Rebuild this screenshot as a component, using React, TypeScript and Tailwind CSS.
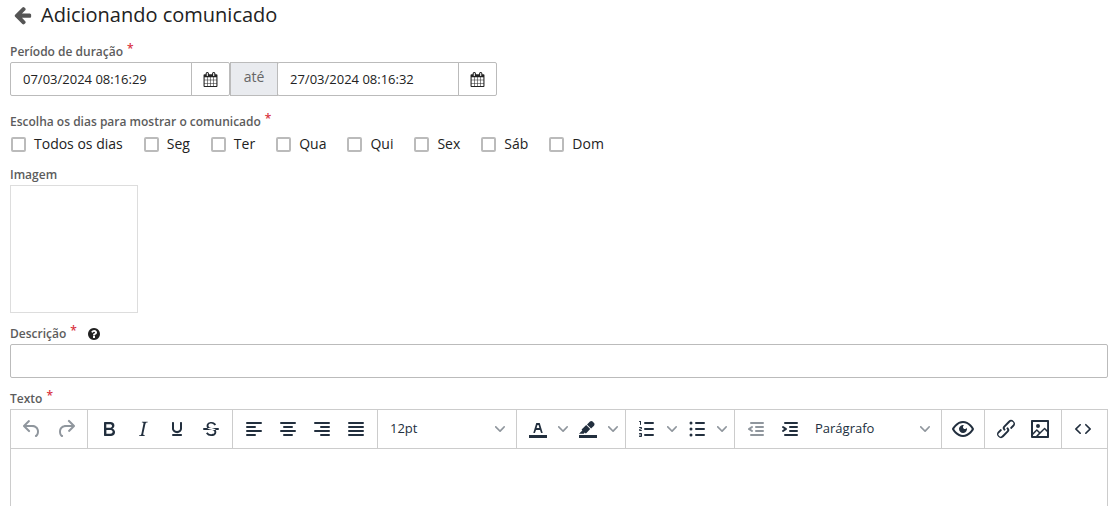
import React from 'react';

const ICONS = {
  undo: 'M6.4 8H12c3.7 0 6.2 2 6.8 5.1.6 2.7-.4 5.6-2.3 6.8a1 1 0 01-1-1.8c1.1-.6 1.8-2.7 1.4-4.6-.5-2.1-2.1-3.5-4.9-3.5H6.4l3.3 3.3a1 1 0 11-1.4 1.4l-5-5a1 1 0 010-1.4l5-5a1 1 0 011.4 1.4L6.4 8z',
  redo: 'M17.6 10H12c-2.8 0-4.4 1.4-4.9 3.5-.4 2 .3 4 1.4 4.6a1 1 0 11-1 1.8c-2-1.2-2.9-4.1-2.3-6.8.6-3 3-5.1 6.8-5.1h5.6l-3.3-3.3a1 1 0 111.4-1.4l5 5a1 1 0 010 1.4l-5 5a1 1 0 01-1.4-1.4l3.3-3.3z',
  bold: 'M7.8 19c-.3 0-.5 0-.6-.2l-.2-.5V5.7c0-.2 0-.4.2-.5l.6-.2h5c1.5 0 2.7.3 3.5 1 .7.6 1.1 1.4 1.1 2.5a3 3 0 01-.6 1.9c-.4.6-1 1-1.6 1.2.4.1.9.3 1.3.6s.8.7 1 1.2c.4.4.5 1 .5 1.6 0 1.3-.4 2.3-1.3 3-.8.7-2.1 1-3.8 1H7.8zm5-8.3c.6 0 1.2-.1 1.6-.5.4-.3.6-.7.6-1.3 0-1.1-.8-1.7-2.3-1.7H9.3v3.5h3.4zm.5 6c.7 0 1.3-.1 1.7-.4.4-.4.6-.9.6-1.5s-.2-1-.7-1.4c-.4-.3-1-.4-2-.4H9.4v3.8h4z',
  italic: 'M16.7 4.7l-.1.9h-.3c-.6 0-1 0-1.4.3-.3.3-.4.6-.5 1.1l-2.1 9.8v.6c0 .5.4.8 1.4.8h.2l-.2.8H8l.2-.8h.2c1.1 0 1.8-.5 2-1.5l2-9.8.1-.5c0-.6-.4-.8-1.4-.8h-.3l.2-.9h5.8z',
  underline: 'M16 5c.6 0 1 .4 1 1v5.5a4 4 0 01-.4 1.8l-1 1.4a5.3 5.3 0 01-5.5 1 5 5 0 01-1.6-1c-.5-.4-.8-.9-1.1-1.4a4 4 0 01-.4-1.8V6c0-.6.4-1 1-1s1 .4 1 1v5.5c0 .3 0 .6.2 1l.6.7a3.3 3.3 0 002.2.8 3.4 3.4 0 002.2-.8c.3-.2.4-.5.6-.8l.2-.9V6c0-.6.4-1 1-1zM8 17h8c.6 0 1 .4 1 1s-.4 1-1 1H8a1 1 0 010-2z',
  strike: 'M15.6 8.5c-.5-.7-1-1.1-1.3-1.3-.6-.4-1.3-.6-2-.6-2.7 0-2.8 1.7-2.8 2.1 0 1.6 1.8 2 3.2 2.3 4.4.9 4.6 2.8 4.6 3.9 0 1.4-.7 4.1-5 4.1A6.2 6.2 0 017 16.4l1.5-1.1c.4.6 1.6 2 3.7 2 1.6 0 2.5-.4 3-1.2.4-.8.3-2-.8-2.6-.7-.4-1.6-.7-2.9-1-1-.2-3.9-.8-3.9-3.6C7.6 6 10.3 5 12.4 5c2.9 0 4.2 1.6 4.7 2.4l-1.5 1.1zM5 11h14a1 1 0 010 2H5a1 1 0 010-2z',
  alignLeft: 'M5 5h14a1 1 0 010 2H5a1 1 0 110-2zm0 4h8a1 1 0 010 2H5a1 1 0 110-2zm0 8h8a1 1 0 010 2H5a1 1 0 010-2zm0-4h14a1 1 0 010 2H5a1 1 0 010-2z',
  alignCenter: 'M5 5h14a1 1 0 010 2H5a1 1 0 110-2zm3 4h8a1 1 0 010 2H8a1 1 0 110-2zm0 8h8a1 1 0 010 2H8a1 1 0 010-2zm-3-4h14a1 1 0 010 2H5a1 1 0 010-2z',
  alignRight: 'M5 5h14a1 1 0 010 2H5a1 1 0 110-2zm6 4h8a1 1 0 010 2h-8a1 1 0 010-2zm0 8h8a1 1 0 010 2h-8a1 1 0 010-2zm-6-4h14a1 1 0 010 2H5a1 1 0 010-2z',
  justify: 'M5 5h14a1 1 0 010 2H5a1 1 0 110-2zm0 4h14a1 1 0 010 2H5a1 1 0 110-2zm0 4h14a1 1 0 010 2H5a1 1 0 010-2zm0 4h14a1 1 0 010 2H5a1 1 0 010-2z',
  textColor: 'M3 18h18v3H3zM8.7 16h-.8a.5.5 0 01-.5-.6l2.7-9c.1-.3.3-.4.5-.4h2.8c.2 0 .4.1.5.4l2.7 9a.5.5 0 01-.5.6h-.8a.5.5 0 01-.4-.4l-.7-2.2c0-.3-.3-.4-.5-.4h-3.4c-.2 0-.4.1-.5.4l-.7 2.2c0 .3-.2.4-.4.4zm2.6-7.6l-.6 2a.5.5 0 00.5.6h1.6a.5.5 0 00.5-.6l-.6-2c0-.3-.3-.4-.5-.4h-.4c-.2 0-.4.1-.5.4z',
  highlight: 'M3 18h18v3H3zM7.7 16.7H3l3.3-3.3-.7-.8L10.2 8l4 4.1-4 4.2c-.2.2-.6.2-.8 0l-.6-.7-1.1 1.1zm5-7.5L11 7.4l3-2.9a2 2 0 012.6 0L18 6c.7.7.7 2 0 2.7l-2.9 2.9-1.8-1.8-.5-.6z',
  listNum: 'M10 17h8a1 1 0 010 2h-8a1 1 0 010-2zm0-6h8a1 1 0 010 2h-8a1 1 0 010-2zm0-6h8a1 1 0 010 2h-8a1 1 0 110-2zM6 4v3.5c0 .3-.2.5-.5.5a.5.5 0 01-.5-.5V5h-.5a.5.5 0 010-1H6zm-1 8.8l.2.2h1.3c.3 0 .5.2.5.5s-.2.5-.5.5H4.9a1 1 0 01-.9-1V13c0-.4.3-.8.6-1l1.2-.4.2-.3a.2.2 0 00-.2-.2H4.5a.5.5 0 01-.5-.5c0-.3.2-.5.5-.5h1.6c.5 0 .9.4.9 1v.1c0 .4-.3.8-.6 1l-1.2.4-.2.3zM7 17v2c0 .6-.4 1-1 1H4.5a.5.5 0 010-1h1.2c.2 0 .3-.1.3-.3 0-.2-.1-.3-.3-.3H4.4a.4.4 0 110-.8h1.3c.2 0 .3-.1.3-.3 0-.2-.1-.3-.3-.3H4.5a.5.5 0 110-1H6c.6 0 1 .4 1 1z',
  listBull: 'M11 5h8a1 1 0 010 2h-8a1 1 0 010-2zm0 6h8a1 1 0 010 2h-8a1 1 0 010-2zm0 6h8a1 1 0 010 2h-8a1 1 0 010-2zM4.5 6a1.5 1.5 0 113 0 1.5 1.5 0 01-3 0zm0 6a1.5 1.5 0 113 0 1.5 1.5 0 01-3 0zm0 6a1.5 1.5 0 113 0 1.5 1.5 0 01-3 0z',
  outdent: 'M7 5h12a1 1 0 010 2H7a1 1 0 110-2zm5 4h7a1 1 0 010 2h-7a1 1 0 010-2zm0 4h7a1 1 0 010 2h-7a1 1 0 010-2zm-5 4h12a1 1 0 010 2H7a1 1 0 010-2zm1.6-3.8a1 1 0 01-1.2 1.6l-3-2a1 1 0 010-1.6l3-2a1 1 0 011.2 1.6L6.8 12l1.8 1.2z',
  indent: 'M7 5h12a1 1 0 010 2H7a1 1 0 110-2zm5 4h7a1 1 0 010 2h-7a1 1 0 010-2zm0 4h7a1 1 0 010 2h-7a1 1 0 010-2zm-5 4h12a1 1 0 010 2H7a1 1 0 010-2zm-2.6-3.8L6.2 12l-1.8-1.2a1 1 0 011.2-1.6l3 2a1 1 0 010 1.6l-3 2a1 1 0 11-1.2-1.6z',
  preview: 'M3.5 12.5c.5.8 1.1 1.6 1.8 2.3 2 2 4.2 3.2 6.7 3.2s4.7-1.2 6.7-3.2a16.2 16.2 0 002.1-2.8 15.7 15.7 0 00-2.1-2.8c-2-2-4.2-3.2-6.7-3.2a9.3 9.3 0 00-6.7 3.2A16.2 16.2 0 003.2 12c0 .2.2.3.3.5zm-2.4-1l.7-1.2L4 7.8C6.2 5.4 8.9 4 12 4c3 0 5.8 1.4 8.1 3.8a18.2 18.2 0 012.8 3.7v1l-.7 1.2-2.1 2.5c-2.3 2.4-5 3.8-8.1 3.8-3 0-5.8-1.4-8.1-3.8a18.2 18.2 0 01-2.8-3.7 1 1 0 010-1zm12-3.3a2 2 0 102.7 2.6 4 4 0 11-2.6-2.6z',
  link: 'M6.2 12.3a1 1 0 011.4 1.4l-2.1 2a2 2 0 102.7 2.8l4.8-4.8a1 1 0 000-1.4 1 1 0 111.4-1.3 2.9 2.9 0 010 4L9.6 20a3.9 3.9 0 01-5.5-5.5l2-2zm11.6-.6a1 1 0 01-1.4-1.4l2-2a2 2 0 10-2.6-2.8L11 10.3a1 1 0 000 1.4A1 1 0 119.6 13a2.9 2.9 0 010-4L14.4 4a3.9 3.9 0 015.5 5.5l-2 2z',
  image: 'M5 15.7l3.3-3.2c.3-.3.7-.3 1 0L12 15l4.1-4c.3-.4.8-.4 1 0l2 1.9V5H5v10.7zM5 18V19h3l2.8-2.9-2-2L5 17.9zm14-3l-2.5-2.4-6.4 6.5H19v-4zM4 3h16c.6 0 1 .4 1 1v16c0 .6-.4 1-1 1H4a1 1 0 01-1-1V4c0-.6.4-1 1-1zm6 8a2 2 0 100-4 2 2 0 000 4z',
  code: 'M9.8 15.7c.3.3.3.8 0 1-.3.4-.9.4-1.2 0l-4.4-4.1a.8.8 0 010-1.2l4.4-4.2c.3-.3.9-.3 1.2 0 .3.3.3.8 0 1.1L6 12l3.8 3.7zM14.2 15.7c-.3.3-.3.8 0 1 .4.4.9.4 1.2 0l4.4-4.1c.3-.3.3-.9 0-1.2l-4.4-4.2a.8.8 0 00-1.2 0c-.3.3-.3.8 0 1.1L18 12l-3.8 3.7z',
};

const ARROW_LEFT =
  'M1536 896v128q0 53-32.5 90.5t-84.5 37.5h-704l293 294q38 36 38 90t-38 90l-75 76q-37 37-90 37-52 0-91-37l-651-652q-37-37-37-90 0-52 37-91l651-650q38-38 91-38 52 0 90 38l75 74q38 38 38 91t-38 91l-293 293h704q52 0 84.5 37.5t32.5 90.5z';
const CALENDAR =
  'M192 1664h288v-288h-288v288zm352 0h320v-288h-320v288zm-352-352h288v-320h-288v320zm352 0h320v-320h-320v320zm-352-384h288v-288h-288v288zm736 736h320v-288h-320v288zm-384-736h320v-288h-320v288zm768 736h288v-288h-288v288zm-384-352h320v-320h-320v320zm-352-864v-288q0-13-9.5-22.5t-22.5-9.5h-64q-13 0-22.5 9.5t-9.5 22.5v288q0 13 9.5 22.5t22.5 9.5h64q13 0 22.5-9.5t9.5-22.5zm736 864h288v-320h-288v320zm-384-384h320v-288h-320v288zm384 0h288v-288h-288v288zm32-480v-288q0-13-9.5-22.5t-22.5-9.5h-64q-13 0-22.5 9.5t-9.5 22.5v288q0 13 9.5 22.5t22.5 9.5h64q13 0 22.5-9.5t9.5-22.5zm384-64v1280q0 52-38 90t-90 38h-1408q-52 0-90-38t-38-90v-1280q0-52 38-90t90-38h128v-96q0-66 47-113t113-47h64q66 0 113 47t47 113v96h384v-96q0-66 47-113t113-47h64q66 0 113 47t47 113v96h128q52 0 90 38t38 90z';
const QUESTION =
  'M1024 1376v-192q0-14-9-23t-23-9h-192q-14 0-23 9t-9 23v192q0 14 9 23t23 9h192q14 0 23-9t9-23zm256-672q0-88-55.5-163t-138.5-116-170-41q-243 0-371 213-15 24 8 42l132 100q7 6 19 6 16 0 25-12 53-68 86-92 34-24 86-24 48 0 85.5 26t37.5 59q0 38-20 61t-68 45q-63 28-115.5 86.5t-52.5 125.5v36q0 14 9 23t23 9h192q14 0 23-9t9-23q0-19 21.5-49.5t54.5-49.5q32-18 49-28.5t46-35 44.5-48 28-60.5 12.5-81zm384 192q0 209-103 385.5t-279.5 279.5-385.5 103-385.5-103-279.5-279.5-103-385.5 103-385.5 279.5-279.5 385.5-103 385.5 103 279.5 279.5 103 385.5z';

function Glyph({ d, className }: { d: string; className: string }) {
  return (
    <svg viewBox="0 0 1792 1792" fill="currentColor" className={className} aria-hidden="true">
      <path d={d} />
    </svg>
  );
}

function Chevron({ className = '' }: { className?: string }) {
  return (
    <svg width="10" height="10" viewBox="0 0 10 10" className={`fill-[#222f3e] opacity-50 ${className}`} aria-hidden="true">
      <path d="M8.7 2.2c.3-.3.8-.3 1 0 .4.4.4.9 0 1.2L5.7 7.8c-.3.3-.9.3-1.2 0L.2 3.4a.8.8 0 010-1.2c.3-.3.8-.3 1.1 0L5 6l3.7-3.8z" />
    </svg>
  );
}

function Tool({ icon, label, disabled = false }: { icon: keyof typeof ICONS; label: string; disabled?: boolean }) {
  return (
    <button type="button" aria-label={label} disabled={disabled} className="flex h-[34px] w-[34px] items-center justify-center text-[#222f3e] disabled:opacity-50">
      <svg width="24" height="24" viewBox="0 0 24 24" fill="currentColor" fillRule="evenodd" aria-hidden="true">
        <path d={ICONS[icon]} />
      </svg>
    </button>
  );
}

function SplitTool({ icon, label }: { icon: keyof typeof ICONS; label: string }) {
  return (
    <div className="flex">
      <Tool icon={icon} label={label} />
      <button type="button" aria-label={`${label}: opções`} className="flex w-4 items-center justify-center">
        <Chevron />
      </button>
    </div>
  );
}

function ToolSelect({ label, options }: { label: string; options: string[] }) {
  return (
    <div className="relative flex h-[34px] w-[130px] items-center">
      <select aria-label={label} className="h-full w-full appearance-none bg-transparent px-2 text-[13px] text-[#222f3e] outline-none">
        {options.map((o) => (
          <option key={o}>{o}</option>
        ))}
      </select>
      <Chevron className="pointer-events-none absolute right-[7px]" />
    </div>
  );
}

function Group({ children, last = false }: { children: React.ReactNode; last?: boolean }) {
  return <div className={`flex h-[38px] items-center px-1 ${last ? '' : 'border-r border-[#cccccc]'}`}>{children}</div>;
}

function Required() {
  return <span className="ml-1 inline-block -translate-y-[3px] text-xs leading-none font-semibold text-[#d9333f]">*</span>;
}

const LABEL = 'block h-4 text-xs leading-4 font-semibold text-[#5c5c5c]';

function DateField({ label, id, value }: { label: string; id: string; value: string }) {
  return (
    <div className="flex">
      <input id={id} aria-label={label} defaultValue={value} className="h-[34px] w-[182px] rounded-l-xs border border-[#bbbbbb] px-3 text-[13px] text-[#222222] outline-none" />
      <button type="button" aria-label={`Abrir calendário: ${label}`} className="-ml-px flex h-[34px] w-[39px] items-center justify-center rounded-r-xs border border-[#bbbbbb] text-[#222222]">
        <Glyph d={CALENDAR} className="h-[15px] w-[15px]" />
      </button>
    </div>
  );
}

const DAYS = ['Todos os dias', 'Seg', 'Ter', 'Qua', 'Qui', 'Sex', 'Sáb', 'Dom'];

export default function App() {
  return (
    <main className="flex min-h-screen flex-col bg-white pr-[11px] pl-[10px] font-['Open_Sans','Noto_Sans',sans-serif] text-[#222222]">
      <header className="flex h-[30px] items-center gap-[7px] pl-1">
        <button type="button" aria-label="Voltar" className="text-[#555555]">
          <Glyph d={ARROW_LEFT} className="h-5 w-5" />
        </button>
        <h1 className="text-xl leading-none">Adicionando comunicado</h1>
      </header>

      <section className="mt-[14px]">
        <label htmlFor="inicio" className={LABEL}>
          Período de duração
          <Required />
        </label>
        <div className="mt-[2px] flex">
          <DateField label="Data inicial" id="inicio" value="07/03/2024 08:16:29" />
          <span className="flex h-[34px] w-12 justify-center border border-[#bbbbbb] bg-[#e9ebef] pt-1 text-sm text-[#666666]">até</span>
          <div className="-ml-px">
            <DateField label="Data final" id="fim" value="27/03/2024 08:16:32" />
          </div>
        </div>
      </section>

      <fieldset className="mt-[18px]">
        <legend className={LABEL}>
          Escolha os dias para mostrar o comunicado
          <Required />
        </legend>
        <div className="mt-1 flex flex-wrap gap-x-[21px] pl-px">
          {DAYS.map((d) => (
            <label key={d} className="flex items-center gap-2 text-sm leading-5">
              <input type="checkbox" className="h-[15px] w-[15px] appearance-none rounded-xs border-2 border-[#bbbbbb] bg-white checked:bg-[#555555]" />
              {d}
            </label>
          ))}
        </div>
      </fieldset>

      <section className="mt-[13px]">
        <label htmlFor="imagem" className={LABEL}>Imagem</label>
        <button id="imagem" type="button" className="mt-[2px] block h-32 w-32 border border-[#dddddd] bg-white" />
      </section>

      <section className="mt-[13px]">
        <div className="flex items-center gap-[10px]">
          <label htmlFor="descricao" className={LABEL}>
            Descrição
            <Required />
          </label>
          <button type="button" aria-label="Ajuda">
            <Glyph d={QUESTION} className="h-[14px] w-[14px]" />
          </button>
        </div>
        <input id="descricao" className="mt-[2px] block h-[34px] w-full rounded-xs border border-[#bbbbbb] px-3 text-[13px] outline-none" />
      </section>

      <section className="mt-[13px] flex grow flex-col">
        <label htmlFor="texto" className={LABEL}>
          Texto
          <Required />
        </label>
        <div className="mt-[2px] flex grow flex-col border-x border-t border-[#cccccc]">
          <div role="toolbar" aria-label="Formatação" className="flex flex-wrap border-b border-[#cccccc]">
            <Group>
              <Tool icon="undo" label="Desfazer" disabled />
              <Tool icon="redo" label="Refazer" disabled />
            </Group>
            <Group>
              <Tool icon="bold" label="Negrito" />
              <Tool icon="italic" label="Itálico" />
              <Tool icon="underline" label="Sublinhado" />
              <Tool icon="strike" label="Tachado" />
            </Group>
            <Group>
              <Tool icon="alignLeft" label="Alinhar à esquerda" />
              <Tool icon="alignCenter" label="Centralizar" />
              <Tool icon="alignRight" label="Alinhar à direita" />
              <Tool icon="justify" label="Justificar" />
            </Group>
            <Group>
              <ToolSelect label="Tamanho da fonte" options={['12pt', '14pt', '18pt']} />
            </Group>
            <Group>
              <SplitTool icon="textColor" label="Cor do texto" />
              <SplitTool icon="highlight" label="Cor de fundo" />
            </Group>
            <Group>
              <SplitTool icon="listNum" label="Lista numerada" />
              <SplitTool icon="listBull" label="Lista com marcadores" />
            </Group>
            <Group>
              <Tool icon="outdent" label="Diminuir recuo" disabled />
              <Tool icon="indent" label="Aumentar recuo" />
              <ToolSelect label="Blocos" options={['Parágrafo', 'Título 1', 'Título 2']} />
            </Group>
            <Group>
              <Tool icon="preview" label="Visualizar" />
            </Group>
            <Group>
              <Tool icon="link" label="Inserir link" />
              <Tool icon="image" label="Inserir imagem" />
            </Group>
            <Group last>
              <Tool icon="code" label="Código-fonte" />
            </Group>
          </div>
          <textarea id="texto" className="block w-full grow resize-none p-3 text-base outline-none" />
        </div>
      </section>
    </main>
  );
}
